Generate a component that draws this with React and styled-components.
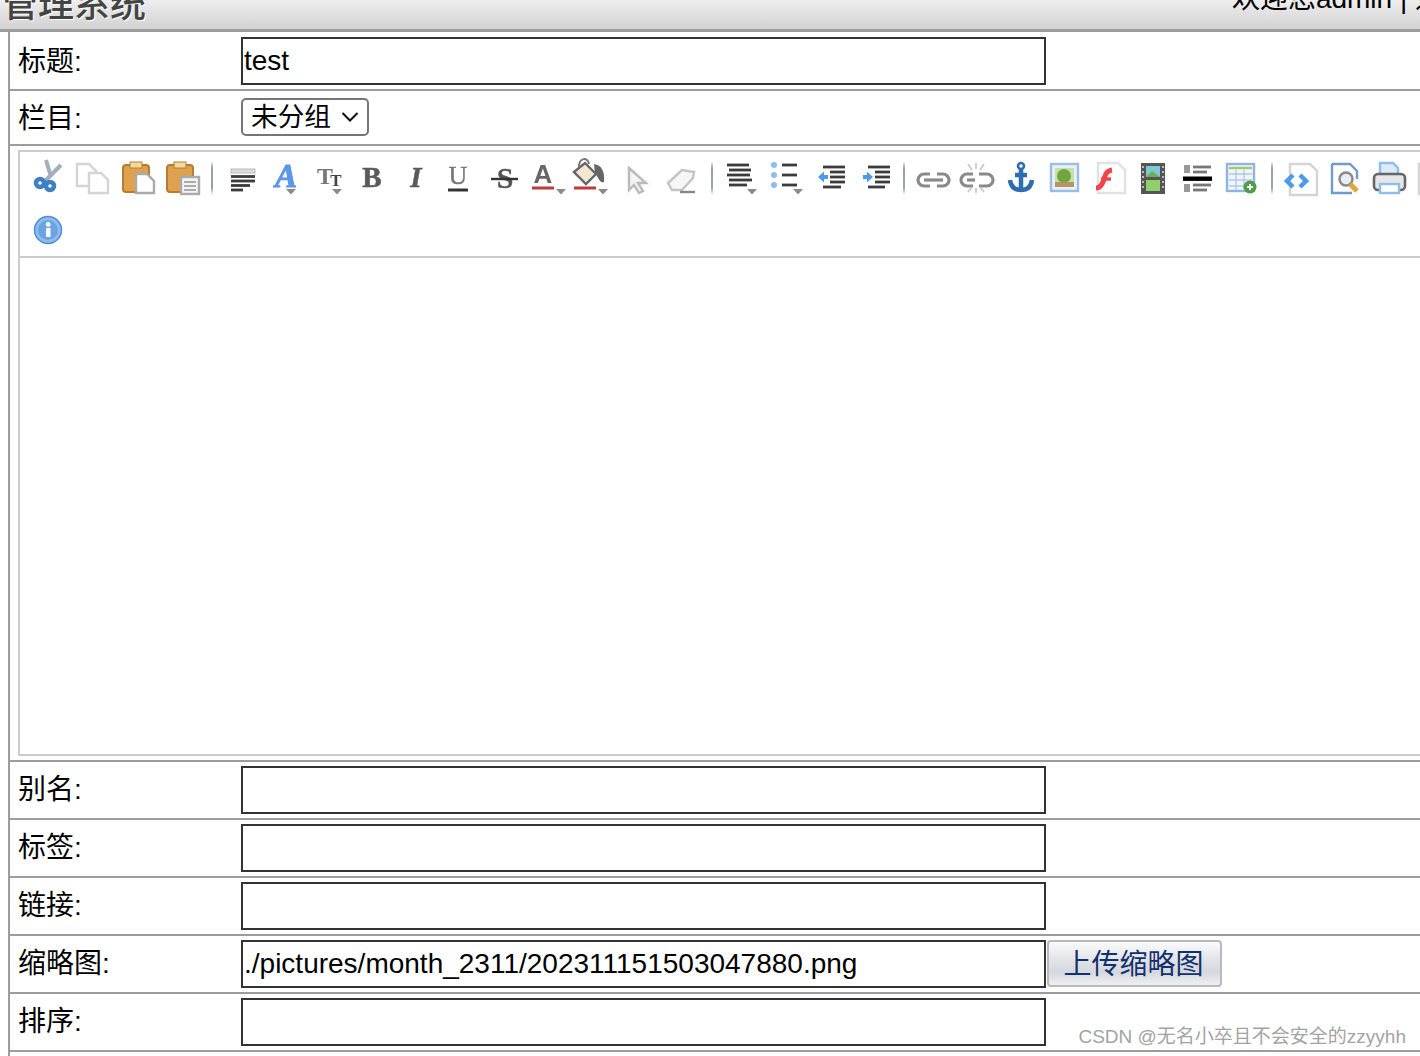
import React from "react";
import styled, { createGlobalStyle } from "styled-components";

const GlobalStyle = createGlobalStyle`
  html, body {
    margin: 0;
    padding: 0;
    height: 100%;
    overflow: hidden;
    background: #fff;
    font-family: "Liberation Sans", "Noto Sans CJK SC", sans-serif;
  }
`;

const Page = styled.div`
  position: relative;
  width: 1420px;
  height: 1056px;
  overflow: hidden;
  color: #000;
  font-size: 28px;
`;

const Header = styled.header`
  display: flex;
  justify-content: space-between;
  height: 29px;
  overflow: hidden;
  border-bottom: 3px solid #9c9c9c;
  background: linear-gradient(#eeeeef, #d2d2d3);
`;

const Title = styled.div`
  margin: -16px 0 0 2px;
  font-size: 36px;
  font-weight: 500;
  line-height: 42px;
  white-space: nowrap;
  color: #444;
  text-shadow: 1px 1px 0 #fff;
`;

const Welcome = styled.div`
  margin: -19px -51px 0 0;
  line-height: 36px;
  white-space: nowrap;
`;

const Form = styled.main`
  margin-left: 8px;
  height: 1024px;
  border-left: 2px solid #9c9c9c;
`;

const Row = styled.div`
  display: flex;
  box-sizing: border-box;
  height: ${(p) => p.$height || 58}px;
  padding-top: ${(p) => p.$top ?? 4}px;
  border-bottom: 2px solid #9c9c9c;
`;

const Label = styled.label`
  flex: none;
  box-sizing: border-box;
  width: 231px;
  height: 48px;
  padding: ${(p) => p.$shift || 0}px 0 0 8px;
  line-height: 48px;
`;

const TextInput = styled.input`
  box-sizing: border-box;
  width: 805px;
  height: 48px;
  margin: 0;
  padding: 0 1px;
  border: 2px solid #333;
  border-radius: 0;
  outline: none;
  font: inherit;
  color: #000;
  background: #fff;
`;

const SelectWrap = styled.div`
  position: relative;
  width: 128px;
  height: 38px;
  margin-top: 4px;
`;

const Select = styled.select`
  display: block;
  box-sizing: border-box;
  width: 100%;
  height: 100%;
  padding: 0 0 0 8px;
  border: 2px solid #767676;
  border-radius: 5px;
  font: inherit;
  font-size: 26.67px;
  color: #000;
  background: #fff;
  appearance: none;
`;

const Chevron = styled.svg`
  position: absolute;
  top: 14px;
  right: 10px;
  width: 18px;
  height: 10px;
  pointer-events: none;
`;

const UploadButton = styled.button`
  box-sizing: border-box;
  width: 175px;
  height: 47px;
  margin-left: 1px;
  padding: 0 2px 3px 0;
  border: 2px solid #b9b9b9;
  border-radius: 4px;
  font: inherit;
  color: #10306e;
  background: linear-gradient(#fbfbfc 0%, #e6e7ea 35%, #d4d7de 70%, #eef0f3 100%);
`;

const EditorRow = styled.div`
  box-sizing: border-box;
  height: 616px;
  padding: 4px 0 4px 8px;
  border-bottom: 2px solid #9c9c9c;
`;

const Editor = styled.div`
  display: flex;
  flex-direction: column;
  box-sizing: border-box;
  width: 1500px;
  height: 100%;
  border: 2px solid #ccc;
`;

const Toolbar = styled.div`
  display: flex;
  flex-wrap: wrap;
  align-content: flex-start;
  box-sizing: border-box;
  height: 106px;
  padding-left: 5px;
  border-bottom: 2px solid #ccc;
`;

const ToolIcon = styled.svg`
  display: block;
  flex: none;
  width: 44px;
  height: 52px;
  filter: blur(0.7px);
`;

const ToolSeparator = styled.span`
  flex: none;
  width: 2px;
  height: 34px;
  margin: 9px 4px 9px 10px;
  background: linear-gradient(transparent, #9aa1a8 20%, #9aa1a8 80%, transparent);
`;

const RowBreak = styled.span`
  flex: none;
  width: 100%;
  height: 0;
`;

const Watermark = styled.div`
  position: absolute;
  right: 14px;
  bottom: 7px;
  font-size: 19px;
  line-height: 24px;
  color: #a3a3a3;
  white-space: nowrap;
`;

const Arrow = ({ x }) => <path d={`M${x - 5} 37h10l-5 5.5z`} fill="#8a8a8a" />;

const Lines = ({ rows, color = "#3c3c3c", w = 2.8 }) => (
  <g stroke={color} strokeWidth={w}>
    {rows.map(([x1, x2, y], i) => (
      <line key={i} x1={x1} x2={x2} y1={y} y2={y} />
    ))}
  </g>
);

const Doc = ({ x, y, w, h, stroke = "#d4d4d4" }) => (
  <path
    d={`M${x} ${y}h${w - 7}l7 7v${h - 7}h-${w}z`}
    fill="#fff"
    stroke={stroke}
    strokeWidth="2.4"
  />
);

const Letter = ({ x, y, size, children, ...rest }) => (
  <text
    x={x}
    y={y}
    fontSize={size}
    textAnchor="middle"
    fontFamily="'Liberation Serif', serif"
    fontWeight="700"
    {...rest}
  >
    {children}
  </text>
);

const icons = {
  cut: (
    <g fill="none">
      <path d="M21 8l5 17M36 13L20 29" stroke="#a3afbb" strokeWidth="4" />
      <circle cx="15" cy="31" r="4" stroke="#3f7fc4" strokeWidth="4.5" />
      <circle cx="25" cy="34" r="4" stroke="#3f7fc4" strokeWidth="4.5" />
    </g>
  ),
  copy: (
    <>
      <Doc x={8} y={12} w={19} h={22} />
      <Doc x={20} y={21} w={19} h={20} />
    </>
  ),
  paste: (
    <>
      <rect x="10" y="13" width="26" height="27" rx="3" fill="#dfa14f" stroke="#b87c2e" strokeWidth="2" />
      <rect x="17" y="10" width="12" height="6" fill="#f1d9a0" stroke="#b87c2e" />
      <Doc x={23} y={22} w={18} h={19} stroke="#aaa" />
    </>
  ),
  word: (
    <>
      <rect x="10" y="13" width="26" height="27" rx="3" fill="#dfa14f" stroke="#b87c2e" strokeWidth="2" />
      <rect x="17" y="10" width="12" height="6" fill="#f1d9a0" stroke="#b87c2e" />
      <rect x="24" y="25" width="18" height="17" fill="#f4f4f4" stroke="#aaa" strokeWidth="2.4" />
      <Lines rows={[[27, 39, 30], [27, 39, 34], [27, 39, 38]]} color="#999" w={1.6} />
    </>
  ),
  align: (
    <>
      <rect x="14" y="17" width="24" height="4" fill="#ddd" stroke="#bbb" />
      <Lines rows={[[14, 38, 24.5], [14, 38, 29], [14, 33, 33.5], [14, 26, 38]]} />
    </>
  ),
  font: (
    <>
      <Letter x={25} y={35} size={33} fill="#5b97e6" fontStyle="italic" stroke="#5b97e6" strokeWidth="1">A</Letter>
      <Arrow x={30} />
    </>
  ),
  size: (
    <>
      <Letter x={20} y={32} size={24} fill="#777">T</Letter>
      <Letter x={31} y={34} size={17} fill="#444">T</Letter>
      <Arrow x={32} />
    </>
  ),
  bold: <Letter x={23} y={35} size={29} fill="#5a5a5a" stroke="#5a5a5a" strokeWidth="0.6">B</Letter>,
  italic: <Letter x={23} y={35} size={29} fill="#5a5a5a" fontStyle="italic" stroke="#5a5a5a" strokeWidth="0.5">I</Letter>,
  underline: (
    <>
      <Letter x={21} y={32} size={26} fill="#777" fontWeight="400" stroke="#777" strokeWidth="0.4">U</Letter>
      <line x1="11" x2="31" y1="38" y2="38" stroke="#333" strokeWidth="3" />
    </>
  ),
  strike: (
    <>
      <Letter x={24} y={36} size={30} fill="#555" stroke="#555" strokeWidth="0.3">S</Letter>
      <line x1="10" x2="37" y1="27" y2="27" stroke="#333" strokeWidth="2.4" />
    </>
  ),
  color: (
    <>
      <Letter x={18} y={31} size={26} fill="#666" fontFamily="'Liberation Sans', sans-serif">A</Letter>
      <line x1="7" x2="29" y1="36" y2="36" stroke="#c2393a" strokeWidth="3" />
      <Arrow x={36} />
    </>
  ),
  fill: (
    <>
      <path d="M25 12c8 1 11 8 10 18-5 2-6-7-9-8z" fill="#666" />
      <path d="M5 20L16 11l11 11-10 10z" fill="#f3e8cf" stroke="#666" strokeWidth="2.4" />
      <path d="M10 15c0-10 9-10 10-3" fill="none" stroke="#777" strokeWidth="2" />
      <line x1="5" x2="27" y1="36" y2="36" stroke="#c2393a" strokeWidth="3" />
      <Arrow x={34} />
    </>
  ),
  select: (
    <path
      d="M16 16l17 15-8 0 5 8-4 2-5-8-5 5z"
      fill="#f4f4f4"
      stroke="#bbb"
      strokeWidth="2.4"
    />
  ),
  eraser: (
    <>
      <path d="M11 31l14-13 12 2-1 6-11 12H15z" fill="#f6f6f6" stroke="#c4c4c4" strokeWidth="2.4" />
      <line x1="23" x2="38" y1="40" y2="40" stroke="#888" strokeWidth="2.4" />
    </>
  ),
  ol: (
    <>
      <Lines rows={[[10, 32, 13], [12, 34, 18], [10, 33, 23], [12, 35, 28], [12, 30, 33]]} />
      <Arrow x={35} />
    </>
  ),
  ul: (
    <>
      <g fill="#8fbdf0">
        <circle cx="13" cy="13" r="3" />
        <circle cx="13" cy="23" r="3" />
        <circle cx="13" cy="33" r="3" />
      </g>
      <Lines rows={[[21, 36, 13], [21, 36, 23], [21, 36, 33]]} />
      <Arrow x={37} />
    </>
  ),
  outdent: (
    <>
      <Lines rows={[[18, 40, 15], [25, 40, 20], [25, 40, 25], [25, 40, 30], [18, 36, 35]]} />
      <path d="M13 25l6-5.5v3.5h4v4h-4v3.5z" fill="#4f9ae8" />
    </>
  ),
  indent: (
    <>
      <Lines rows={[[19, 41, 15], [26, 41, 20], [26, 41, 25], [26, 41, 30], [19, 36, 35]]} />
      <path d="M24 25l-6-5.5v3.5h-4v4h4v3.5z" fill="#4f9ae8" />
    </>
  ),
  link: (
    <g fill="none" stroke="#8a8a8a" strokeWidth="3.2">
      <path d="M21 22h-6a6 6 0 0 0 0 12h6" />
      <path d="M28 22h6a6 6 0 0 1 0 12h-6" />
      <line x1="15" x2="34" y1="28" y2="28" />
    </g>
  ),
  unlink: (
    <g fill="none" stroke="#8a8a8a" strokeWidth="3.2">
      <path d="M20 22h-6a6 6 0 0 0 0 12h6" />
      <path d="M26 22h8a6 6 0 0 1 0 12h-8" />
      <line x1="14" x2="22" y1="28" y2="28" />
      <path
        d="M23 11v6M15 12l4 6M31 12l-4 6M23 36v5M15 40l4-5M31 40l-4-5"
        stroke="#c9c9c9"
        strokeWidth="1.8"
      />
    </g>
  ),
  anchor: (
    <g fill="none" stroke="#2f6db3" strokeWidth="4.5">
      <circle cx="24" cy="14" r="3" strokeWidth="2.6" />
      <path d="M24 17v21M18 23h12M13 28c1 8 6 10 11 10s10-2 11-10" />
    </g>
  ),
  image: (
    <>
      <rect x="10" y="12" width="27" height="27" fill="#e8f0fa" stroke="#9dbce3" strokeWidth="2.4" />
      <rect x="14" y="16" width="19" height="19" fill="#c6e0a8" />
      <circle cx="23" cy="24" r="7" fill="#6fa63f" />
      <rect x="14" y="30" width="19" height="5" fill="#b59663" />
    </>
  ),
  flash: (
    <>
      <Doc x={13} y={11} w={27} h={30} stroke="#e2e2e2" />
      <path d="M27 18c-7 1-7 7-9 12s-5 6-7 6" fill="none" stroke="#f0444a" strokeWidth="5" />
      <line x1="16" x2="26" y1="27" y2="27" stroke="#f0444a" strokeWidth="3.4" />
    </>
  ),
  media: (
    <>
      <rect x="12" y="11" width="24" height="31" fill="#555" />
      <rect x="17" y="14" width="14" height="11" fill="#7cc8d8" />
      <rect x="17" y="28" width="14" height="11" fill="#8fcf6c" />
      <path d="M17 25l6-6 8 6z" fill="#6fb04c" />
      <path d="M14 14v25M34 14v25" stroke="#bbb" strokeWidth="2" strokeDasharray="2 3" />
    </>
  ),
  hr: (
    <>
      <rect x="10" y="24.5" width="29" height="4.4" fill="#000" />
      <Lines rows={[[20, 38, 15], [20, 34, 20], [20, 38, 33], [20, 34, 38]]} color="#777" />
      <g fill="#999">
        <rect x="11" y="13" width="6" height="8" />
        <rect x="11" y="32" width="6" height="8" />
      </g>
    </>
  ),
  table: (
    <>
      <rect x="10" y="12" width="27" height="27" fill="#f2f6fc" stroke="#8fb4e4" strokeWidth="2.4" />
      <line x1="12" x2="35" y1="16" y2="16" stroke="#a8c86f" strokeWidth="2.5" />
      <path d="M12 22h23M12 28h23M12 34h23M19 18v20M27 18v20" stroke="#b3c9e6" strokeWidth="1.4" />
      <circle cx="33" cy="35" r="6.5" fill="#4f9d45" />
      <path d="M33 32v6M30 35h6" stroke="#fff" strokeWidth="2" />
    </>
  ),
  source: (
    <>
      <Doc x={13} y={12} w={27} h={31} />
      <path d="M16 23l-6 6 6 6M23 23l6 6-6 6" fill="none" stroke="#4c9be8" strokeWidth="4.5" />
    </>
  ),
  preview: (
    <>
      <path d="M11 12h18l7 7v8M11 12v29h20" fill="#fff" stroke="#6f9bd0" strokeWidth="2.4" />
      <circle cx="25" cy="27" r="6.5" fill="#e8eef5" stroke="#888" strokeWidth="2.4" />
      <path d="M29 32l7 7" stroke="#e0a63b" strokeWidth="5" />
    </>
  ),
  print: (
    <>
      <path d="M15 24V11h13l5 5v8" fill="#dcebfb" stroke="#8fbdf0" strokeWidth="2.4" />
      <rect x="9" y="22" width="31" height="16" rx="4" fill="#e6e6e6" stroke="#666" strokeWidth="2.6" />
      <rect x="15" y="32" width="19" height="9" fill="#fff" stroke="#8fbdf0" strokeWidth="2.4" />
    </>
  ),
  info: (
    <>
      <circle cx="23" cy="26" r="13.5" fill="#8fbcec" stroke="#4d8ed4" strokeWidth="1.5" />
      <circle cx="23" cy="26" r="10" fill="#6ba4e3" />
      <rect x="21" y="24" width="4.5" height="9" fill="#fff" />
      <circle cx="23.2" cy="20.5" r="2.4" fill="#fff" />
    </>
  ),
  next: <Doc x={10} y={12} w={27} h={30} />,
};

const toolbarItems = [
  "cut", "copy", "paste", "word", "|",
  "align", "font", "size", "bold", "italic", "underline", "strike", "color", "fill", "select", "eraser", "|",
  "ol", "ul", "outdent", "indent", "|",
  "link", "unlink", "anchor", "image", "flash", "media", "hr", "table", "|",
  "source", "preview", "print", "next", "br",
  "info",
];

const TextRow = ({ label, value = "", children }) => (
  <Row>
    <Label>{label}</Label>
    <TextInput defaultValue={value} />
    {children}
  </Row>
);

const App = () => {
  return (
    <Page>
      <GlobalStyle />
      <Header>
        <Title>管理系统</Title>
        <Welcome>欢迎您admin | 退出</Welcome>
      </Header>
      <Form>
        <Row $height={59} $top={5}>
          <Label $shift={1}>标题:</Label>
          <TextInput defaultValue="test" />
        </Row>
        <Row $height={55} $top={3}>
          <Label $shift={1}>栏目:</Label>
          <SelectWrap>
            <Select defaultValue="0">
              <option value="0">未分组</option>
            </Select>
            <Chevron viewBox="0 0 18 10">
              <path d="M1.5 1l7.5 7.5L16.5 1" fill="none" stroke="#111" strokeWidth="2" />
            </Chevron>
          </SelectWrap>
        </Row>
        <EditorRow>
          <Editor>
            <Toolbar>
              {toolbarItems.map((name, i) => {
                if (name === "|") return <ToolSeparator key={i} />;
                if (name === "br") return <RowBreak key={i} />;
                return (
                  <ToolIcon key={i} viewBox="0 0 44 52">
                    {icons[name]}
                  </ToolIcon>
                );
              })}
            </Toolbar>
          </Editor>
        </EditorRow>
        <TextRow label="别名:" />
        <TextRow label="标签:" />
        <TextRow label="链接:" />
        <TextRow label="缩略图:" value="./pictures/month_2311/202311151503047880.png">
          <UploadButton type="button">上传缩略图</UploadButton>
        </TextRow>
        <TextRow label="排序:" />
      </Form>
      <Watermark>CSDN @无名小卒且不会安全的zzyyhh</Watermark>
    </Page>
  );
};

export default App;
